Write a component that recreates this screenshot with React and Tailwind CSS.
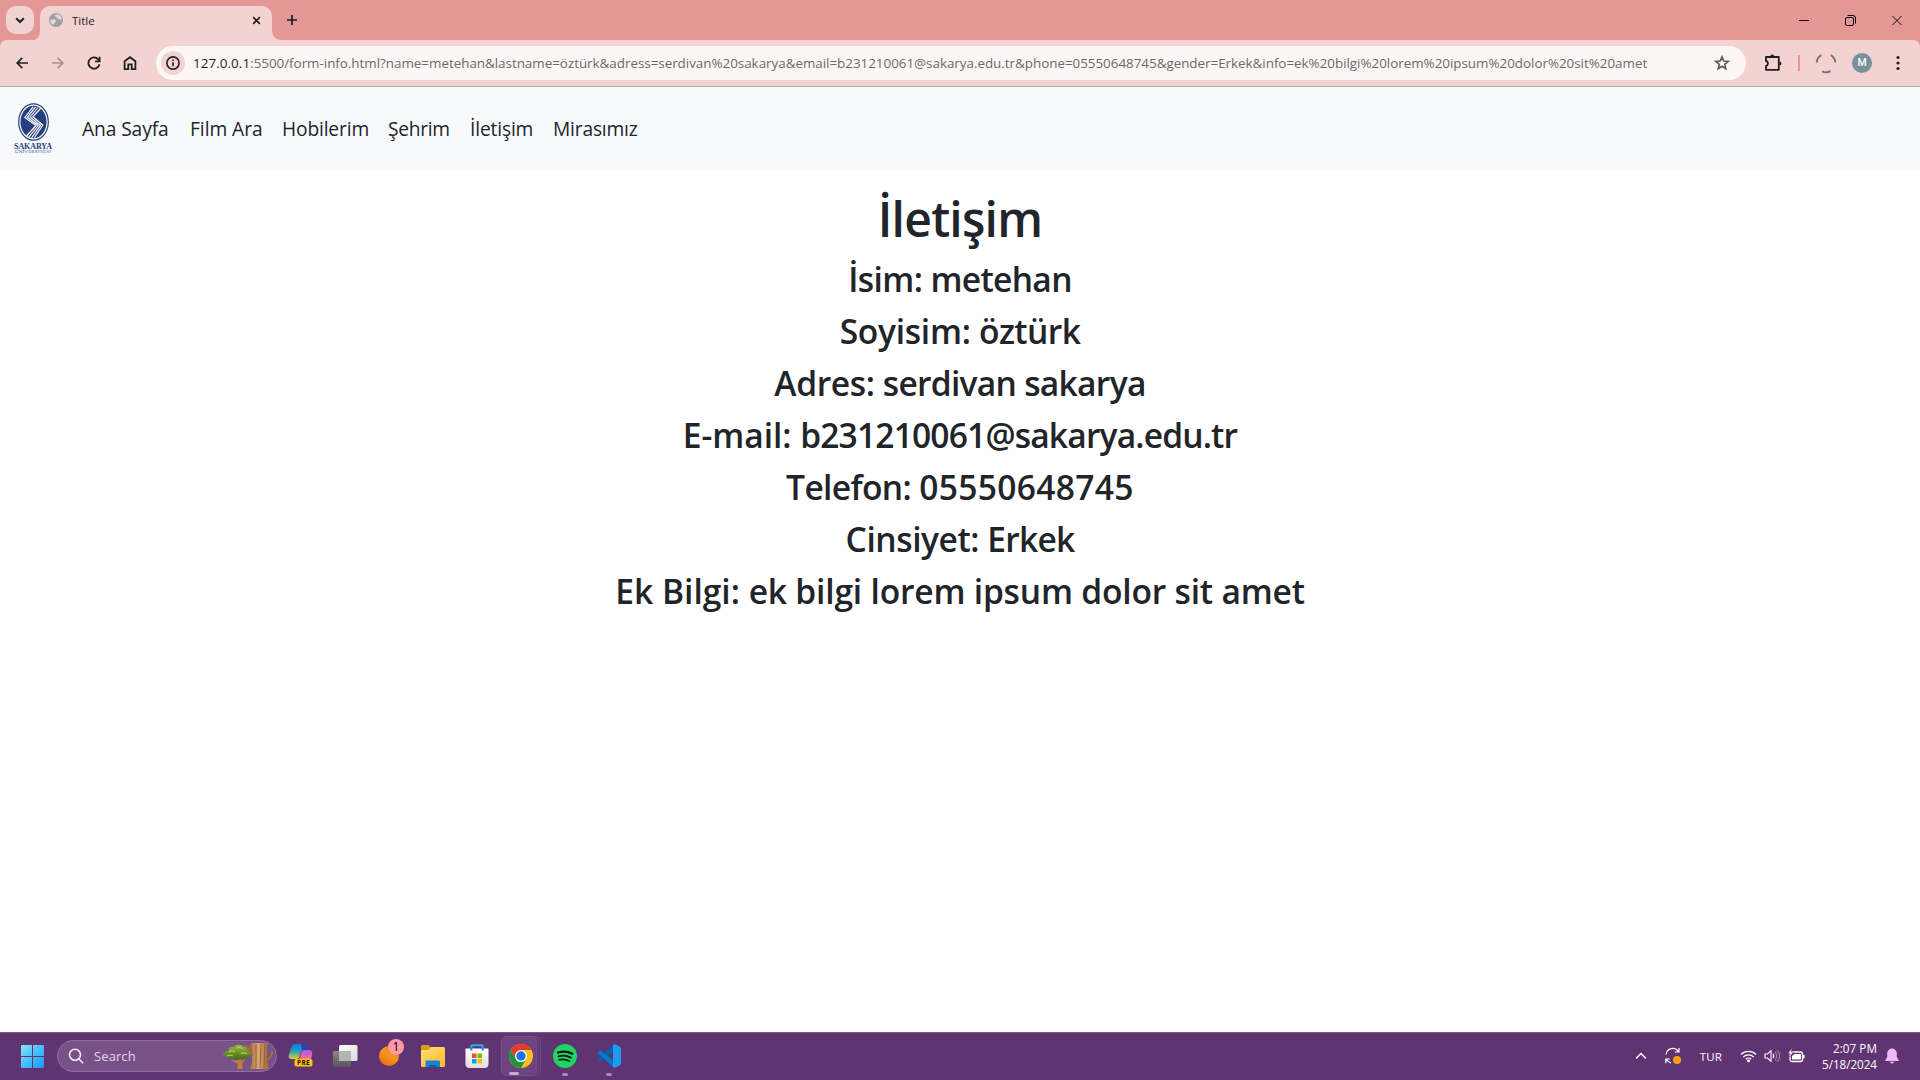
import React from "react";

const navItems = [
  { label: "Ana Sayfa", width: "w-[108px]", tracking: "tracking-[-0.1px]" },
  { label: "Film Ara", width: "w-[92px]", tracking: "tracking-[-0.05px]" },
  { label: "Hobilerim", width: "w-[106px]", tracking: "tracking-[-0.15px]" },
  { label: "Şehrim", width: "w-[82px]", tracking: "tracking-[-0.3px]" },
  { label: "İletişim", width: "w-[83px]", tracking: "tracking-[-0.15px]" },
  { label: "Mirasımız", width: "w-[90px]", tracking: "tracking-[-0.18px]" },
];

const details = [
  { label: "İsim:", value: "metehan", labelTracking: "tracking-[-0.6px]", valueTracking: "tracking-[-0.7px]" },
  { label: "Soyisim:", value: "öztürk", labelTracking: "tracking-[-0.3px]", valueTracking: "tracking-[-0.6px]" },
  { label: "Adres:", value: "serdivan sakarya", labelTracking: "tracking-[-0.4px]", valueTracking: "tracking-[-0.72px]" },
  { label: "E-mail:", value: "b231210061@sakarya.edu.tr", labelTracking: "tracking-[-0.05px]", valueTracking: "tracking-[-0.84px]" },
  { label: "Telefon:", value: "05550648745", labelTracking: "tracking-[-0.65px]", valueTracking: "tracking-[0.32px]" },
  { label: "Cinsiyet:", value: "Erkek", labelTracking: "tracking-[-0.45px]", valueTracking: "tracking-[-0.8px]" },
  { label: "Ek Bilgi:", value: "ek bilgi lorem ipsum dolor sit amet", labelTracking: "tracking-[0px]", valueTracking: "tracking-[-0.2px]" },
];

const stroke = { fill: "none", stroke: "currentColor" };

function TabStrip() {
  return (
    <div className="flex h-10 bg-[#e59795]">
      <button className="mt-1.5 ml-1.5 flex size-7 items-center justify-center rounded-[10px] bg-[#f3d3d2]">
        <svg width="10" height="7" viewBox="0 0 10 7" {...stroke} strokeWidth="2"><path d="M1.2 1.2 5 5l3.8-3.8" /></svg>
      </button>
      <div className="flex w-[250px] items-end">
        <svg className="shrink-0" width="6" height="10" viewBox="0 0 6 10"><path d="M6 0v10H0C4 9 6 6 6 0Z" fill="#f3d3d2" /></svg>
        <div className="flex h-[34px] w-[232px] shrink-0 items-center rounded-t-[10px] bg-[#f3d3d2] pr-[11px] pl-[9px]">
          <svg className="mb-1.5" width="14" height="14" viewBox="0 0 14 14">
            <circle cx="7" cy="7" r="7" fill="#9aa0a6" />
            <path d="M8.200 1.300C6 1.500 5.300 2.600 6.200 3.600c.6.700 1.600.4 1.800 1.300.2.900 1.800.7 2.500 1.500.6.700 1.500.4 2.200 0L12 3.500 10.500 2ZM1.200 6.600h3.500c1.600 0 2.600.9 2.300 2-.2.900-1 .9-1.500 1.500-.4.600-.3 1.500-.9 2L2 10.300Z" fill="#f3d3d2" />
          </svg>
          <span className="mb-[4px] ml-[9px] text-[11.5px] leading-4 text-[#1f1f1f]">Title</span>
          <svg className="mb-1.5 ml-auto" width="9" height="9" viewBox="0 0 10 10" {...stroke} strokeWidth="1.800"><path d="m1.300 1.300 7.400 7.400m0-7.400L1.300 8.700" /></svg>
        </div>
        <svg className="shrink-0" width="10" height="10" viewBox="0 0 10 10"><path d="M0 0v10h10C3.500 10 0 6.500 0 0Z" fill="#f3d3d2" /></svg>
      </div>
      <svg className="mt-[15px] ml-[3px]" width="10" height="10" viewBox="0 0 10 10" {...stroke} strokeWidth="1.7"><path d="M5 0v10M0 5h10" /></svg>
      <div className="ml-auto flex h-10 items-center pr-[18px] text-black">
        <svg width="10" height="11" viewBox="0 0 10 11" {...stroke}><path d="M0 5.500h10" /></svg>
        <svg className="ml-9" width="11" height="11" viewBox="0 0 11 11" {...stroke} strokeWidth="1"><rect x=".5" y="2.500" width="8" height="8" rx="1.500" /><path d="M2.500.5H8A2.500 2.500 0 0 1 10.500 3v5.500" /></svg>
        <svg className="ml-9" width="10" height="11" viewBox="0 0 11 11" {...stroke}><path d="m.5.5 10 10m0-10-10 10" /></svg>
      </div>
    </div>
  );
}

function Toolbar() {
  return (
    <div className="bg-[#e59795]">
      <div className="flex h-[47px] items-center rounded-t-[7px] border-b border-[#c0a5a5] bg-[#f3d3d2] text-[#1f1f1f]">
        <div className="flex w-[156px] items-center pl-4">
          <svg width="12" height="12" viewBox="0 0 12 12" {...stroke} strokeWidth="1.7"><path d="M12 6H1.300M6.300.8 1.200 6l5.100 5.200" /></svg>
          <svg className="ml-6 text-[#a89192]" width="12" height="12" viewBox="0 0 12 12" {...stroke} strokeWidth="1.7"><path d="M0 6h10.700M5.700.8 10.800 6l-5.100 5.200" /></svg>
          <svg className="ml-[23px]" width="14" height="14" viewBox="0 0 14 14" {...stroke} strokeWidth="1.800"><path d="M12.500 8.300A5.600 5.600 0 1 1 11.200 3.300L12.500 4.700" /><path d="M12.600.8v4.500H8.100" /></svg>
          <svg className="ml-[22px]" width="14" height="14" viewBox="0 0 14 14" {...stroke} strokeWidth="1.800"><path d="M1.600 5.300 7 1.200l5.400 4.100v7.800H8.700V8.400H5.300v4.700H1.600Z" /></svg>
        </div>
        <div className="flex h-[34px] w-[1590px] items-center rounded-full bg-[#fdf6f6] pl-[5px]">
          <span className="flex size-6 items-center justify-center rounded-full bg-[#f3d3d2]">
            <svg width="14" height="14" viewBox="0 0 14 14" {...stroke} strokeWidth="1.600"><circle cx="7" cy="7" r="6.100" /><path d="M7 6.300v4M7 3.500v1.600" /></svg>
          </span>
          <p className="ml-[8px] text-[13.44px] leading-5 whitespace-nowrap text-[#6f6869]">
            <span className="tracking-[0.05px] text-[#1f1f1f]">127.0.0.1</span>
            <span className="tracking-[-0.038px]">:5500/form-info.html?name=metehan&amp;lastname=öztürk&amp;adress=serdivan%20sakarya&amp;email=b231210061@sakarya.edu.tr&amp;phone=05550648745&amp;gender=Erkek&amp;info=ek%20bilgi%20lorem%20ipsum%20dolor%20sit%20amet</span>
          </p>
          <svg className="mr-4 ml-auto text-[#5f5758]" width="16" height="16" viewBox="0 0 16 16" {...stroke} strokeWidth="1.600"><path d="m8 1.900 1.700 4.200 4.500.3-3.500 2.900 1.100 4.400L8 11.300l-3.800 2.400 1.100-4.400-3.500-2.900 4.500-.3Z" /></svg>
        </div>
        <svg className="mb-px ml-[18px]" width="18" height="18" viewBox="0 0 18 18"><path d="M2 3h12.800v12.800H2v-4c2.600-.6 2.600-4.200 0-4.800Z" fill="none" stroke="currentColor" strokeWidth="1.800" strokeLinejoin="round" /><path d="M6.200 2.500a2 2 0 0 1 4 0ZM15.500 7.400a2 2 0 0 1 0 4Z" fill="currentColor" /></svg>
        <span className="ml-[16px] h-4 w-0.5 bg-[#e59795]" />
        <svg className="ml-[15px] text-[#7d6f70]" width="22" height="22" viewBox="0 0 22 22"><circle cx="11" cy="11" r="9" fill="#fbcfd2" opacity=".6" /><g fill="none" stroke="currentColor" strokeWidth="1.900"><path d="M1.700 10.500a9.300 9.300 0 0 1 4.500-7.400M15.800 3.100a9.300 9.300 0 0 1 4.500 7.400M7 19.400a9.300 9.300 0 0 0 8.500-.2" /></g></svg>
        <span className="ml-[15px] flex size-5 items-center justify-center rounded-full bg-[#78909c] font-['Roboto'] text-[10.500px] font-medium text-white">M</span>
        <svg className="ml-6" width="4" height="16" viewBox="0 0 4 16" fill="currentColor"><circle cx="2" cy="2.500" r="1.600" /><circle cx="2" cy="8" r="1.600" /><circle cx="2" cy="13.500" r="1.600" /></svg>
      </div>
    </div>
  );
}

function UniversityLogo() {
  return (
    <div className="flex w-[38px] flex-col items-center text-[#233f7e]">
      <svg className="shrink-0" width="31" height="38" viewBox="0 0 31 38">
        <ellipse cx="15.500" cy="19" rx="14.800" ry="18.200" fill="#fff" stroke="#233f7e" strokeWidth="1.200" />
        <ellipse cx="15.500" cy="19" rx="13" ry="16.300" fill="#233f7e" />
        <g fill="none" stroke="#fff" strokeWidth="1.150" strokeLinejoin="round">
          <path d="M15 3.800 6.800 14.500 18 22.500 8.500 33" />
          <path d="M17.500 3.800 9.300 14.300 20.300 22.500 10.800 34.200" />
          <path d="M20 4.500 12 14 22.500 22.300 13.500 35" />
          <path d="M22.500 5.500 14.800 13.800 24.800 22 16.500 34.500" />
        </g>
      </svg>
      <span className="mt-[2px] font-['Liberation_Serif'] text-[8px] leading-[7px] font-bold tracking-[-0.100px]">SAKARYA</span>
      <span className="font-['Liberation_Serif'] text-[4.800px] leading-[4px] tracking-[0.300px] whitespace-nowrap opacity-90">ÜNİVERSİTESİ</span>
    </div>
  );
}

function PageContent() {
  return (
    <main className="flex-1 bg-white text-[#212529]">
      <nav className="flex h-[83px] items-center bg-[#f8f9fb] pl-[14px]">
        <UniversityLogo />
        <ul className="ml-[30px] flex text-[19.200px] leading-[30px] whitespace-nowrap">
          {navItems.map((item) => (
            <li key={item.label} className={`${item.width} ${item.tracking}`}>{item.label}</li>
          ))}
        </ul>
      </nav>
      <section className="flex flex-col gap-2.5 pt-[18px] text-center font-semibold">
        <h1 className="pt-px text-[48px] leading-[59px] tracking-[-0.750px]">İletişim</h1>
        {details.map((line) => (
          <h3 key={line.label} className="text-[33.600px] leading-[42px]">
            <span className={line.labelTracking}>{line.label} </span>
            <span className={line.valueTracking}>{line.value}</span>
          </h3>
        ))}
      </section>
    </main>
  );
}

function SearchArt() {
  return (
    <svg className="ml-auto" width="52" height="28" viewBox="0 0 52 28">
      <defs>
        <linearGradient id="trunk"><stop stopColor="#a9713f" /><stop offset=".45" stopColor="#dba873" /><stop offset="1" stopColor="#9a6234" /></linearGradient>
        <linearGradient id="leaf" x2="0" y2="1"><stop stopColor="#9db93b" /><stop offset="1" stopColor="#3f6a1d" /></linearGradient>
      </defs>
      <path d="M13 15h5l1 4 5-3-4 6 1 5h-6l1-5-8-4 6 1Z" fill="#c27d46" />
      <path d="M1 13c0-3 3-4 5-4 0-4 4-5 6-4 3-4 9-2 10 0 4-1 6 2 5 4 3 1 3 6-1 6-2 3-6 2-7 2-3 2-6 1-7-1-2 1-5 1-6-1-3 0-5-1-5-2Z" fill="url(#leaf)" />
      <path d="M7 10c2-2 5-1 6 0m2-4c2-1 4-1 5 1m-1 5c2-2 5-1 6 0M5 14c2-1 4-1 6 0" stroke="#b9cd55" strokeWidth="1.200" fill="none" />
      <path d="M29 1h17l-1 7 0 8 2 11H28l2-8Z" fill="url(#trunk)" />
      <path d="M34 2v24M39 2l-1 24M43 2l-1 24" stroke="#8e5c33" strokeWidth=".9" fill="none" />
      <path d="M23 2c2 6 5 8 8 11M28 8V3M46 18c2-2 4-5 4-9M48 14l3-3" stroke="#a56b3b" strokeWidth="1.800" fill="none" />
    </svg>
  );
}

function Copilot() {
  return (
    <svg width="26" height="26" viewBox="0 0 26 26">
      <defs>
        <linearGradient id="cpA" x2="0" y2="1"><stop stopColor="#1275e6" /><stop offset=".5" stopColor="#20a6b8" /><stop offset="1" stopColor="#e5cf25" /></linearGradient>
        <linearGradient id="cpB" x2="0" y2="1"><stop stopColor="#a15cf3" /><stop offset=".6" stopColor="#ee65a6" /><stop offset="1" stopColor="#ff9a55" /></linearGradient>
      </defs>
      <path d="M7.500 1H15c2 0 3 1 3.500 3l.6 2h-2.800c-2 0-3 1-3.600 3l-1.500 5c-.5 1.500-1.500 2-3 2H4c-3 0-3.800-1.500-3-4.500L3.500 4C4.200 2 5.500 1 7.500 1Z" fill="url(#cpA)" />
      <path d="M13 1h2.500c2 0 3 1 3.500 3l1 2.500h-3.500c-1 0-2 .5-2.500 1.500Z" fill="#1b47bf" />
      <path d="M16 7h5c2.600 0 3.800 1.600 3 5l-1.500 6H11l2.200-8.500C13.700 8 14.500 7 16 7Z" fill="url(#cpB)" />
      <rect x="6.500" y="16" width="18" height="7.500" rx="2" fill="#fdc510" />
      <text x="15.500" y="22.200" textAnchor="middle" fontFamily="Open Sans, sans-serif" fontWeight="700" fontSize="6.500" letterSpacing=".3" fill="#1b1200">PRE</text>
    </svg>
  );
}

function TaskView() {
  return (
    <svg width="25" height="22" viewBox="0 0 25 22">
      <defs>
        <linearGradient id="tvA" x2="1" y2="1"><stop stopColor="#fff" /><stop offset="1" stopColor="#dadada" /></linearGradient>
        <linearGradient id="tvB" x2="0" y2="1"><stop stopColor="#8a8a8a" /><stop offset="1" stopColor="#565656" /></linearGradient>
      </defs>
      <rect y="6" width="18" height="16" rx="1.500" fill="url(#tvB)" />
      <rect x="6" width="18.500" height="16" rx="1.500" fill="url(#tvA)" />
      <path d="M6 6h12v10H6Z" fill="#b4b4b4" />
    </svg>
  );
}

function OrangeApp() {
  return (
    <div className="relative size-[26px]">
      <svg width="26" height="26" viewBox="0 0 26 26"><defs><linearGradient id="or" x1=".8" y1="0" x2=".3" y2="1"><stop stopColor="#f08a1c" /><stop offset=".5" stopColor="#f7941d" /><stop offset="1" stopColor="#ee6c0c" /></linearGradient></defs><circle cx="13" cy="13" r="10" fill="url(#or)" /></svg>
      <span className="absolute -top-[4px] left-[12px] flex size-4 items-center justify-center rounded-full bg-[#ff99a4] text-[12px] text-black">1</span>
    </div>
  );
}

function Explorer() {
  return (
    <svg width="24" height="22" viewBox="0 0 24 22">
      <defs><linearGradient id="ex" x2="1" y2="1"><stop stopColor="#ffdf72" /><stop offset="1" stopColor="#fdb92a" /></linearGradient></defs>
      <path d="M0 1.500C0 .6.600 0 1.500 0h6l2.500 2.500L8 6H0Z" fill="#dc9a15" />
      <path d="M0 5h7l3-3h12.500c.9 0 1.500.6 1.500 1.500v17c0 .9-.6 1.500-1.500 1.500h-21C.6 22 0 21.400 0 20.500Z" fill="url(#ex)" />
      <path d="M4.500 22v-5c0-1 .7-1.500 1.500-1.500h11.500c1 0 1.500.7 1.500 1.500v5Z" fill="#1484d6" /><path d="M8 22v-2h7.500v2Z" fill="#0f5fa6" />
    </svg>
  );
}

function Store() {
  return (
    <svg width="24" height="24" viewBox="0 0 24 24">
      <defs><linearGradient id="st" x2="0" y2="1"><stop stopColor="#fff" /><stop offset="1" stopColor="#dedede" /></linearGradient></defs>
      <path d="M6.300 6V2.200c0-.7.300-1 1-1h9.400c.7 0 1 .3 1 1V6" fill="none" stroke="#23b0ee" strokeWidth="2" />
      <path d="M.5 4.500h23V20c0 2.500-1.300 4-4 4h-15c-2.700 0-4-1.500-4-4Z" fill="url(#st)" />
      <path d="M6.300 6.500V3.500M17.700 6.500V3.500" stroke="#1a86d8" strokeWidth="2" />
      <path d="M7 9.500h4.500V14H7Z" fill="#f25022" /><path d="M12.500 9.500H17V14h-4.500Z" fill="#7fba00" /><path d="M7 15h4.500v4.500H7Z" fill="#00a4ef" /><path d="M12.500 15H17v4.500h-4.500Z" fill="#ffb900" />
    </svg>
  );
}

function Chrome() {
  return (
    <svg className="shrink-0" width="24" height="24" viewBox="0 0 24 24">
      <circle cx="12" cy="12" r="12" fill="#fbc116" />
      <path d="M1.600 6 6.800 15 12 12V6h10.400A12 12 0 0 0 1.600 6Z" fill="#e33b2e" />
      <path d="M1.600 6 6.800 15a6 6 0 0 0 10.400 0L12 24A12 12 0 0 1 1.600 6Z" fill="#229342" />
      <circle cx="12" cy="12" r="6" fill="#fff" /><circle cx="12" cy="12" r="4.700" fill="#1a73e8" />
    </svg>
  );
}

function Spotify() {
  return (
    <svg width="24" height="24" viewBox="0 0 24 24"><circle cx="12" cy="12" r="12" fill="#1ed760" /><g fill="none" stroke="#10131a" strokeLinecap="round"><path d="M5 8.500c5-1.400 10-1 14.300 1.300" strokeWidth="2.300" /><path d="M5.500 12.300c4.500-1.200 8.800-.7 12.300 1.300" strokeWidth="1.900" /><path d="M6 15.800c4-.9 7.400-.4 10.400 1.300" strokeWidth="1.600" /></g></svg>
  );
}

function VSCode() {
  return (
    <svg width="24" height="24" viewBox="0 0 24 24">
      <path d="M17 0 1 14.700c-.5.5-.5 1 0 1.500l1.300 1.200c.4.400 1 .4 1.500.100L18 6.500Z" fill="#0065a9" />
      <path d="M17 24 1 9.300c-.5-.5-.5-1 0-1.500l1.300-1.200c.4-.4 1-.4 1.500-.100L18 17.500Z" fill="#007acc" />
      <path d="M17 0l6 2.700c.6.300 1 .8 1 1.500v15.600c0 .7-.4 1.200-1 1.500L17 24c1-.5 1-1 1-2V2c0-1 0-1.500-1-2Z" fill="#1f9cf0" /><path d="M16 1.500 17.500 0 18 2v20l-.5 2-1.500-1.500Z" fill="#1f9cf0" />
    </svg>
  );
}

function AppSlot({ children, indicator }) {
  return (
    <div className="flex h-10 w-11 flex-col items-center justify-center">
      <div className="flex h-[26px] items-center justify-center">{children}</div>
      {indicator && <span className="mt-[4px] -mb-[7px] h-[3px] w-1.5 rounded-full bg-[#a78fb3]" />}
    </div>
  );
}

function Taskbar() {
  return (
    <footer className="flex h-12 items-center border-t border-[#7b5688] bg-[#603372] pb-px text-white">
      <svg className="ml-[21px]" width="23" height="23" viewBox="0 0 23 23">
        <defs><linearGradient id="win" x2="1" y2="1"><stop stopColor="#7fe6fb" /><stop offset="1" stopColor="#1397f2" /></linearGradient></defs>
        <path d="M1 0h10v11H0V1a1 1 0 0 1 1-1Zm11 0h10a1 1 0 0 1 1 1v10H12ZM0 12h11v11H1a1 1 0 0 1-1-1Zm12 0h11v10a1 1 0 0 1-1 1H12Z" fill="url(#win)" />
      </svg>
      <div className="ml-[13px] flex h-8 w-[220px] items-center rounded-full border border-[#8e6e9d] bg-[#785189] pr-[2px] pl-[10px]">
        <svg width="16" height="16" viewBox="0 0 16 16" fill="none" stroke="#f1eaf3" strokeWidth="1.600" strokeLinecap="round"><circle cx="7" cy="6.700" r="5.500" /><path d="m11 11 3.600 3.800" /></svg>
        <span className="mb-px ml-[10px] text-[13px] leading-5 tracking-[0.100px] text-[#e2d8e6]">Search</span>
        <SearchArt />
      </div>
      <div className="ml-[2px] flex items-center">
        <AppSlot><Copilot /></AppSlot>
        <AppSlot><TaskView /></AppSlot>
        <AppSlot><OrangeApp /></AppSlot>
        <AppSlot><Explorer /></AppSlot>
        <AppSlot><Store /></AppSlot>
        <div className="mr-[2px] ml-[2px] h-10 w-[40px] rounded-md border border-[#704a80] bg-[#67397a]">
          <div className="-mt-px -ml-px flex h-10 w-[36px] flex-col items-center rounded-md border border-[#74508a] bg-[#6d4380] pt-[7px] pl-[4px]">
            <Chrome />
            <span className="mt-[4px] mr-[14px] h-[3px] w-[10px] shrink-0 rounded-full bg-[#c4b0cb]" />
          </div>
        </div>
        <AppSlot indicator><Spotify /></AppSlot>
        <AppSlot indicator><VSCode /></AppSlot>
      </div>
      <div className="ml-auto flex items-center">
        <svg width="12" height="8" viewBox="0 0 12 8" {...stroke} strokeWidth="1.500"><path d="m1 6.500 5-5 5 5" /></svg>
        <svg className="ml-[17px]" width="18" height="18" viewBox="0 0 18 18"><g fill="none" stroke="#fff" strokeWidth="1.200"><path d="M2 7.500a6.800 6.800 0 0 1 12.500-2.800M15 1v4h-4M7 15.800a7 7 0 0 1-4.500-3.300M1.800 16.300V12h4" /></g><circle cx="13" cy="13" r="4" fill="#ff9b0d" /></svg>
        <span className="mt-[2px] ml-[18px] text-[11.520px] leading-4 tracking-[0.100px]">TUR</span>
        <svg className="ml-[18px]" width="17" height="14" viewBox="0 0 17 14" {...stroke} strokeWidth="1.200"><path d="M1 5.500a10.700 10.700 0 0 1 15 0M3.300 8a7.400 7.400 0 0 1 10.400 0M5.700 10.300a4 4 0 0 1 5.600 0" /><circle cx="8.500" cy="11.800" r="1.500" fill="#fff" stroke="none" /></svg>
        <svg className="ml-[7px]" width="17" height="14" viewBox="0 0 17 14" {...stroke} strokeWidth="1.100"><path d="M1 5v4h2.500L7 12.300V1.700L3.500 5ZM8.800 4.800a3.300 3.300 0 0 1 0 4.400" /><path d="M11 3a5.500 5.500 0 0 1 0 8M13.300 1.300a8 8 0 0 1 0 11.400" opacity=".4" /></svg>
        <svg className="mb-px ml-[7px]" width="17" height="15" viewBox="0 0 17 15"><rect x="2" y="4" width="12.500" height="9.500" rx="2" fill="none" stroke="#fff" strokeWidth="1.300" /><path d="M6.500 6H13v5.500H4v-3.500ZM15 7h1.600v3.500H15Z" fill="#fff" /><path d="M4 0 0 5.500h2.200L1.500 9l4-5H3.300Z" fill="#fff" stroke="#603372" strokeWidth=".5" /></svg>
        <div className="mb-[1px] ml-[15px] flex w-[57px] flex-col items-end text-[11.700px] leading-4">
          <span className="tracking-[0.050px] whitespace-nowrap">2:07 PM</span>
          <span className="tracking-[-0.050px]">5/18/2024</span>
        </div>
        <svg className="mr-[21px] ml-[8px]" width="14" height="16" viewBox="0 0 14 16" fill="#f0b9f3"><path d="M7 .5a4.800 4.800 0 0 1 4.800 4.800V9l1.900 3c.2.500 0 .9-.5.9H.8c-.5 0-.7-.4-.5-.9L2.200 9V5.300A4.800 4.800 0 0 1 7 .5ZM4.700 13.800h4.600a2.400 2.400 0 0 1-4.600 0Z" /></svg>
      </div>
    </footer>
  );
}

export default function App() {
  return (
    <div className="flex h-[1080px] w-[1920px] flex-col overflow-hidden font-['Open_Sans','Noto_Sans',sans-serif] text-[#1f1f1f]">
      <header>
        <TabStrip />
        <Toolbar />
      </header>
      <PageContent />
      <Taskbar />
    </div>
  );
}
